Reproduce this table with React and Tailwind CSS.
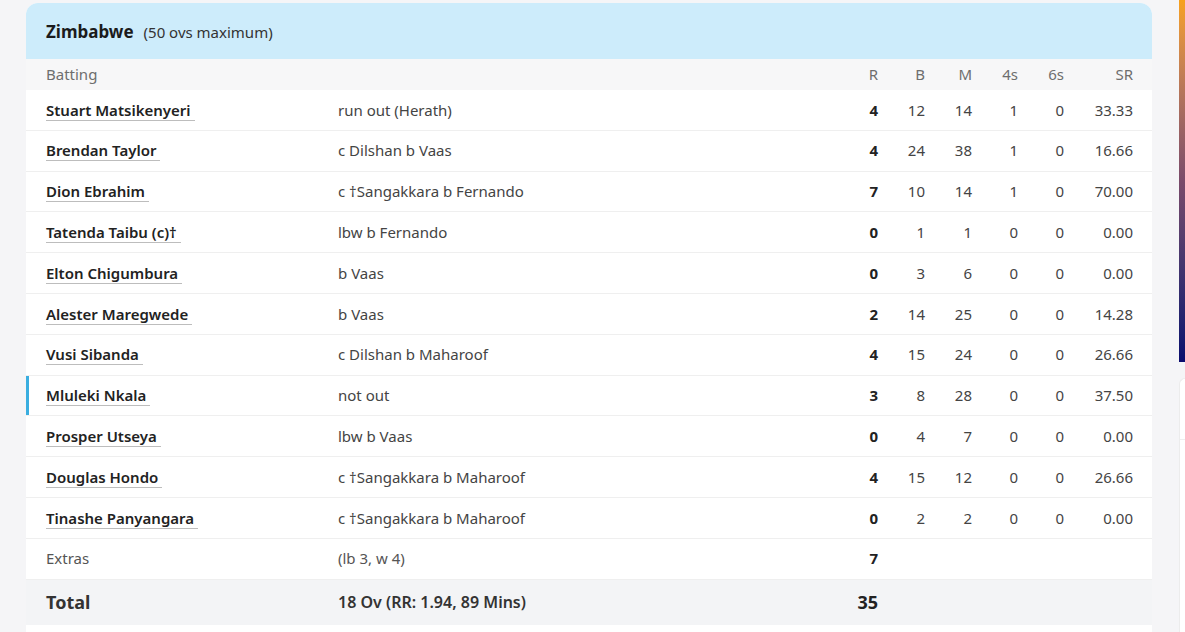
import React from "react";

const batters = [
  { name: "Stuart Matsikenyeri", how: "run out (Herath)", r: 4, b: 12, m: 14, f: 1, s: 0, sr: "33.33" },
  { name: "Brendan Taylor", how: "c Dilshan b Vaas", r: 4, b: 24, m: 38, f: 1, s: 0, sr: "16.66" },
  { name: "Dion Ebrahim", how: "c †Sangakkara b Fernando", r: 7, b: 10, m: 14, f: 1, s: 0, sr: "70.00" },
  { name: "Tatenda Taibu (c)†", how: "lbw b Fernando", r: 0, b: 1, m: 1, f: 0, s: 0, sr: "0.00" },
  { name: "Elton Chigumbura", how: "b Vaas", r: 0, b: 3, m: 6, f: 0, s: 0, sr: "0.00" },
  { name: "Alester Maregwede", how: "b Vaas", r: 2, b: 14, m: 25, f: 0, s: 0, sr: "14.28" },
  { name: "Vusi Sibanda", how: "c Dilshan b Maharoof", r: 4, b: 15, m: 24, f: 0, s: 0, sr: "26.66" },
  { name: "Mluleki Nkala", how: "not out", r: 3, b: 8, m: 28, f: 0, s: 0, sr: "37.50", notOut: true },
  { name: "Prosper Utseya", how: "lbw b Vaas", r: 0, b: 4, m: 7, f: 0, s: 0, sr: "0.00" },
  { name: "Douglas Hondo", how: "c †Sangakkara b Maharoof", r: 4, b: 15, m: 12, f: 0, s: 0, sr: "26.66" },
  { name: "Tinashe Panyangara", how: "c †Sangakkara b Maharoof", r: 0, b: 2, m: 2, f: 0, s: 0, sr: "0.00" },
];

const cols = "grid grid-cols-[292px_500px_40px_47px_47px_46px_46px_69px] items-center pl-5 pr-5";

export default function App() {
  return (
    <div
      className="flex h-[632px] w-[1185px] overflow-hidden bg-[#f5f5f7] text-[15px]"
      style={{ fontFamily: '"Noto Sans", "Open Sans", sans-serif' }}
    >
      {/* scorecard */}
      <div className="ml-[26px] mt-[3px] w-[1126px] flex-none">
        <div className="overflow-hidden rounded-t-xl bg-white">
          <div className="flex h-[56px] items-center gap-[10px] bg-[#cdecfb] px-5 pt-[2px]">
            <span className="text-[17px] font-bold text-[#1b1b1b]">Zimbabwe</span>
            <span className="text-[15px] text-[#333]">(50 ovs maximum)</span>
          </div>

          <div className={`${cols} h-[31px] bg-[#f7f7f8] text-[#6e6e6e]`}>
            <span>Batting</span>
            <span />
            <span className="text-right">R</span>
            <span className="text-right">B</span>
            <span className="text-right">M</span>
            <span className="text-right">4s</span>
            <span className="text-right">6s</span>
            <span className="text-right">SR</span>
          </div>

          {batters.map((p) => (
            <div
              key={p.name}
              className={`${cols} relative h-[40.8px] border-b border-[#efefef] text-[#444]`}
            >
              {p.notOut && (
                <span className="absolute top-0 left-0 h-full w-[3px] bg-[#3aaee0]" />
              )}
              <span>
                <span className="border-b border-[#bdbdbd] pr-[4px] font-semibold text-[#222]">
                  {p.name}
                </span>
              </span>
              <span>{p.how}</span>
              <span className="text-right font-bold text-[#222]">{p.r}</span>
              <span className="text-right">{p.b}</span>
              <span className="text-right">{p.m}</span>
              <span className="text-right">{p.f}</span>
              <span className="text-right">{p.s}</span>
              <span className="text-right">{p.sr}</span>
            </div>
          ))}

          <div className={`${cols} h-[40.8px] border-b border-[#efefef] text-[#555]`}>
            <span>Extras</span>
            <span>(lb 3, w 4)</span>
            <span className="text-right font-bold text-[#222]">7</span>
          </div>

          <div className={`${cols} h-[45px] bg-[#f3f4f6] text-[#333]`}>
            <span className="text-[18px] font-bold text-[#333]">Total</span>
            <span className="text-[16px] font-semibold">18 Ov (RR: 1.94, 89 Mins)</span>
            <span className="text-right text-[18px] font-bold text-[#222]">35</span>
          </div>
          <div className="h-[20px] bg-white" />
        </div>
      </div>

      {/* right sidebar peek */}
      <div className="ml-[27px] flex flex-1 flex-col">
        <div className="h-[362px] w-full bg-gradient-to-b from-[#f7a11a] via-[#7a4a6a] to-[#0b0b6e]" />
        <div className="mt-[16px] flex-1 rounded-tl-lg border-t border-l border-[#ececec] bg-white">
          <div className="mt-[60px] border-t border-[#eeeeee]" />
        </div>
      </div>
    </div>
  );
}
